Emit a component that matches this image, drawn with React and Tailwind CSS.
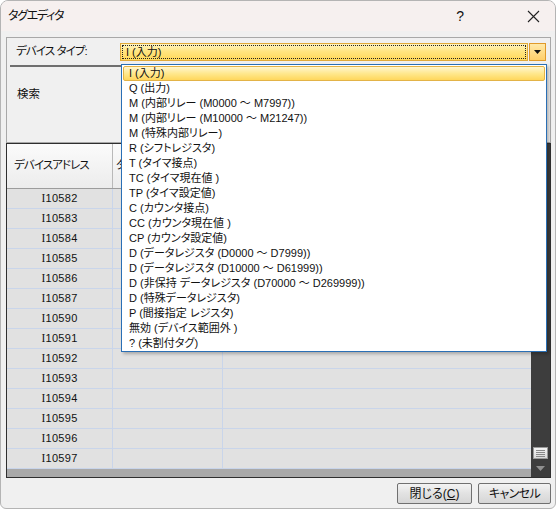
import React from "react";

const items = [
  "I (入力)",
  "Q (出力)",
  "M (内部リレー (M0000 〜 M7997))",
  "M (内部リレー (M10000 〜 M21247))",
  "M (特殊内部リレー)",
  "R (シフトレジスタ)",
  "T (タイマ接点)",
  "TC (タイマ現在値 )",
  "TP (タイマ設定値)",
  "C (カウンタ接点)",
  "CC (カウンタ現在値 )",
  "CP (カウンタ設定値)",
  "D (データレジスタ (D0000 〜 D7999))",
  "D (データレジスタ (D10000 〜 D61999))",
  "D (非保持 データレジスタ (D70000 〜 D269999))",
  "D (特殊データレジスタ)",
  "P (間接指定 レジスタ)",
  "無効 (デバイス範囲外 )",
  "? (未割付タグ)",
];

const rows = [
  "10582", "10583", "10584", "10585", "10586", "10587", "10590",
  "10591", "10592", "10593", "10594", "10595", "10596", "10597",
];

export default function App() {
  return (
    <div className="relative w-[556px] h-[509px] overflow-hidden bg-[#f0f0f0] border border-[#b4b4b4] rounded-t-[8px] rounded-b-[6px] text-[#111] font-['Liberation_Sans','Noto_Sans_CJK_JP',sans-serif] text-[11px] [font-feature-settings:'palt'] leading-none">
      {/* title bar */}
      <div className="h-[30px] bg-[#f6f0ef] flex items-center pl-[7px]">
        <span className="text-[12px] tracking-[-1.3px]">タグエディタ</span>
        <span className="ml-auto text-[14px] mr-[63px]">?</span>
        <svg width="13" height="13" viewBox="0 0 13 13" className="mr-[15px]">
          <path d="M1 1 L12 12 M12 1 L1 12" stroke="#222" strokeWidth="1.1" />
        </svg>
      </div>

      {/* body */}
      <div className="pt-[6px] pl-[5px]">
        {/* top panel */}
        <div className="w-[545px] h-[106px] border border-[#a8a8a8] flex flex-col">
          <div className="flex items-center h-[18px] mt-[5px]">
            <span className="ml-[9px] w-[104px] text-[11.5px] tracking-[-0.9px]">デバイス タイプ:</span>
            <div className="w-[408px] h-[18px] border border-[#e0a93a] bg-[linear-gradient(#fff4c2,#ffe581_45%,#ffd95a)] p-[1px]">
              <div className="h-full border border-dotted border-[#222] flex items-center pl-[3px]">
                I (入力)
              </div>
            </div>
            <div className="ml-[1px] w-[17px] h-[18px] border border-[#e09a2a] bg-[linear-gradient(#ffe9a8,#ffcf6a)] flex items-center justify-center">
              <svg width="7" height="4" viewBox="0 0 7 4"><path d="M0 0 H7 L3.5 4 Z" fill="#111" /></svg>
            </div>
          </div>
          <div className="ml-[3px] mt-[4px] w-[410px] h-[2px] bg-[#6f6f6f]" />
          <div className="ml-[10px] mt-[22px] text-[11.5px]">検索</div>
        </div>

        {/* table */}
        <div className="w-[545px] h-[335px] border border-[#2f2f2f] flex bg-[#a9a9a9]">
          <div className="flex-1 flex flex-col">
            <div className="h-[45px] flex border-b border-[#9c9c9c] bg-[linear-gradient(#fbfbfb,#ececec)]">
              <div className="w-[106px] border-r border-[#b9b9b9] flex items-center pl-[7px] text-[11.5px] tracking-[-0.9px]">デバイスアドレス</div>
              <div className="w-[110px] border-r border-[#b9b9b9] flex items-center pl-[3px] text-[11.5px]">タグ名</div>
              <div className="flex-1" />
            </div>
            <div className="flex flex-col">
              {rows.map((r) => (
                <div key={r} className="h-[20px] flex bg-[#e1e1e1] border-b border-[#c9d5ea]">
                  <div className="w-[106px] border-r border-[#c9d5ea] flex items-center justify-center text-[11px] tracking-[0.3px]">
                    <span className="font-['Liberation_Serif',serif] text-[11.5px]">I</span>
                    {r}
                  </div>
                  <div className="w-[110px] border-r border-[#c9d5ea]" />
                  <div className="flex-1" />
                </div>
              ))}
            </div>
            <div className="flex-1 bg-[#a9a9a9]" />
          </div>
          {/* vertical scrollbar */}
          <div className="w-[19px] bg-[#3d3d3d] flex flex-col items-center">
            <div className="flex-1" />
            <div className="w-[15px] h-[12px] bg-[linear-gradient(#f4f4f4,#dadada)] border border-[#9a9a9a] flex flex-col justify-center gap-[1px] px-[2px]">
              <div className="h-[1px] bg-[#8a8a8a]" />
              <div className="h-[1px] bg-[#8a8a8a]" />
              <div className="h-[1px] bg-[#8a8a8a]" />
              <div className="h-[1px] bg-[#8a8a8a]" />
            </div>
            <div className="h-[18px] flex items-center justify-center">
              <svg width="9" height="5" viewBox="0 0 9 5"><path d="M0 0 H9 L4.5 5 Z" fill="#8f8f8f" /></svg>
            </div>
          </div>
        </div>

        {/* buttons */}
        <div className="w-[545px] flex justify-end gap-[6px] mt-[5px]">
          <button className="w-[75px] h-[21px] border border-[#707070] rounded-[2px] bg-[linear-gradient(#f3f3f3,#e2e2e2_50%,#d6d6d6)] text-[12px] flex items-center justify-center">
            閉じる(<span className="underline">C</span>)
          </button>
          <button className="w-[73px] h-[21px] border border-[#707070] rounded-[2px] bg-[linear-gradient(#f3f3f3,#e2e2e2_50%,#d6d6d6)] text-[12px] tracking-[-0.6px] flex items-center justify-center">
            キャンセル
          </button>
        </div>
      </div>

      {/* dropdown list overlay */}
      <div className="absolute left-[120px] top-[63px] w-[426px] h-[288px] bg-white border border-[#2a6fb5] shadow-[2px_2px_3px_rgba(0,0,0,0.25)] p-[1px]">
        {items.map((it, i) => (
          <div
            key={it}
            className={
              i === 0
                ? "h-[15px] flex items-center pl-[5px] border border-[#e3b347] rounded-[2px] bg-[linear-gradient(#fff6cf,#ffe88e_50%,#ffd75c)]"
                : "h-[15px] flex items-center pl-[6px]"
            }
          >
            {it}
          </div>
        ))}
      </div>
    </div>
  );
}
